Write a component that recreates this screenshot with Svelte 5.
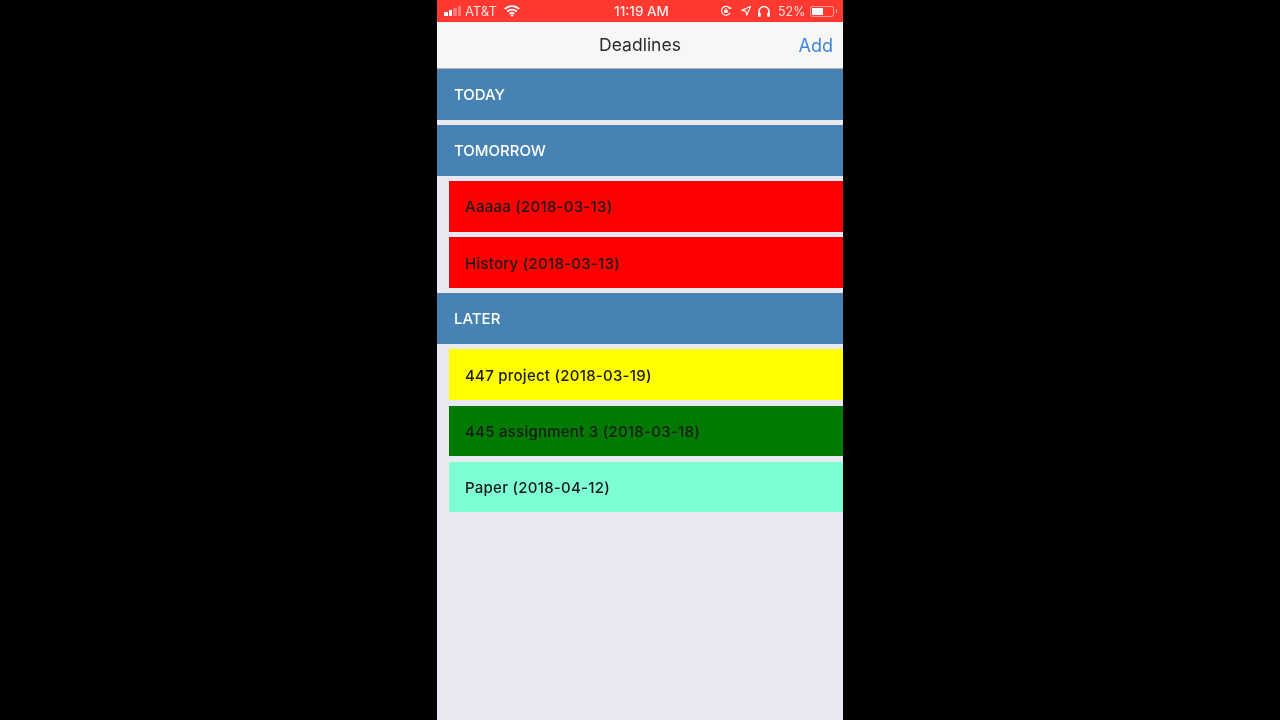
<script>
  const sections = [
    { title: 'TODAY', items: [] },
    {
      title: 'TOMORROW',
      items: [
        { label: 'Aaaaa (2018-03-13)', color: '#ff0000' },
        { label: 'History (2018-03-13)', color: '#ff0000' }
      ]
    },
    {
      title: 'LATER',
      items: [
        { label: '447 project (2018-03-19)', color: '#ffff00' },
        { label: '445 assignment 3 (2018-03-18)', color: '#007a00' },
        { label: 'Paper (2018-04-12)', color: '#7fffd4' }
      ]
    }
  ];
</script>

<div class="stage">
  <div class="phone">
    <div class="status">
      <div class="side">
        <span class="bars">
          <i class="on h1"></i><i class="on h2"></i><i class="h3"></i><i class="h4"></i>
        </span>
        <span class="carrier">AT&amp;T</span>
        <svg class="wifi" width="16" height="12" viewBox="0 0 16 12">
          <path d="M.8 4.2a10.2 10.2 0 0 1 14.4 0M3.2 6.6a6.8 6.8 0 0 1 9.6 0M5.6 8.8a3.4 3.4 0 0 1 4.8 0" fill="none" stroke="#fff" stroke-width="1.7" />
          <path d="M8 12 6.4 10.2a2.2 2.2 0 0 1 3.2 0z" fill="#fff" />
        </svg>
      </div>
      <div class="time">11:19 AM</div>
      <div class="side right">
        <svg width="12" height="12" viewBox="0 0 13 13">
          <path d="M10.8 8.4A4.8 4.8 0 1 1 10.6 3.8" fill="none" stroke="#fff" stroke-width="1.2" />
          <path d="M9 4.4h3.6L11 1.8z" fill="#fff" />
          <rect x="4.4" y="5.6" width="4" height="3" rx=".5" fill="#fff" />
          <path d="M5.3 5.8V5a1.1 1.1 0 0 1 2.2 0v.8" fill="none" stroke="#fff" stroke-width=".8" />
        </svg>
        <svg class="arrow" width="10" height="10" viewBox="0 0 11 11">
          <path d="M10.5.5 .8 4.8l4.6.8.9 4.6z" fill="none" stroke="#fff" stroke-width="1.2" stroke-linejoin="round" />
        </svg>
        <svg class="phones" width="14" height="13" viewBox="0 0 14 13">
          <path d="M2 9V6.5a5 5 0 0 1 10 0V9" fill="none" stroke="#fff" stroke-width="1.5" />
          <rect x="1" y="7.5" width="2.8" height="4.5" rx="1.2" fill="#fff" />
          <rect x="10.2" y="7.5" width="2.8" height="4.5" rx="1.2" fill="#fff" />
        </svg>
        <span class="pct">52%</span>
        <span class="battery"><span class="level"></span></span>
        <span class="nub"></span>
      </div>
    </div>

    <header class="nav">
      <span class="title">Deadlines</span>
      <span class="add">Add</span>
    </header>

    <main class="list">
      {#each sections as section}
        <div class="row heading">{section.title}</div>
        {#each section.items as item}
          <div class="row item" style="background: {item.color}">{item.label}</div>
        {/each}
      {/each}
    </main>
  </div>
</div>

<style>
  :global(body) {
    margin: 0;
    background: #000;
  }

  .stage {
    display: flex;
    justify-content: center;
    height: 720px;
    overflow: hidden;
    background: #000;
    font-family: Inter, "Liberation Sans", sans-serif;
  }

  .phone {
    width: 406px;
    height: 720px;
    background: #e9e9f1;
    filter: blur(0.35px);
  }

  .status {
    display: grid;
    grid-template-columns: 1fr auto 1fr;
    align-items: center;
    height: 22px;
    padding: 0 6px 0 7px;
    box-sizing: border-box;
    background: #ff3830;
    color: #fff;
    font-size: 12.5px;
  }

  .side {
    display: flex;
    align-items: center;
  }

  .side.right {
    justify-content: flex-end;
  }

  .bars {
    display: flex;
    align-items: flex-end;
    gap: 1px;
    height: 10px;
  }

  .bars i {
    width: 3.5px;
    background: rgba(255, 255, 255, 0.35);
    border-radius: 0.5px;
  }

  .bars i.on {
    background: #fff;
  }

  .h1 { height: 4px; }
  .h2 { height: 6px; }
  .h3 { height: 8px; }
  .h4 { height: 10px; }

  .carrier {
    margin-left: 4px;
    font-size: 13px;
    opacity: 0.85;
  }

  .wifi {
    margin-left: 7px;
  }

  .time {
    padding-left: 2px;
    font-size: 13.5px;
    font-weight: 500;
    opacity: 0.9;
  }

  .arrow {
    margin-left: 9px;
  }

  .phones {
    margin-left: 6px;
  }

  .pct {
    margin-left: 7px;
    font-size: 12.5px;
    opacity: 0.85;
  }

  .battery {
    display: flex;
    align-items: center;
    width: 24px;
    height: 11px;
    margin-left: 4px;
    padding: 1px;
    box-sizing: border-box;
    border: 1px solid rgba(255, 255, 255, 0.5);
    border-radius: 2.5px;
  }

  .level {
    width: 56%;
    height: 100%;
    background: #fff;
  }

  .nub {
    width: 1.5px;
    height: 4px;
    margin-left: 2px;
    background: rgba(255, 255, 255, 0.6);
  }

  .nav {
    display: flex;
    align-items: center;
    justify-content: center;
    position: relative;
    height: 47px;
    box-sizing: border-box;
    background: #f7f7f7;
    border-bottom: 1px solid #b4b4b8;
  }

  .title {
    padding-bottom: 1px;
    font-size: 17.5px;
    font-weight: 400;
    color: #2b2b2b;
  }

  .add {
    position: absolute;
    right: 10px;
    font-size: 18px;
    color: #3f84dc;
  }

  .list {
    display: flex;
    flex-direction: column;
    gap: 5.6px;
  }

  .row {
    display: flex;
    align-items: center;
    height: 50.5px;
    flex: none;
    box-sizing: border-box;
  }

  .heading {
    padding-left: 17px;
    background: #4682b4;
    color: #fff;
    font-size: 15px;
    font-weight: 500;
  }

  .item {
    margin-left: 11.5px;
    padding: 1px 0 0 16.5px;
    color: #1a1a1a;
    font-size: 15px;
    font-weight: 500;
    letter-spacing: 0.25px;
  }
</style>
